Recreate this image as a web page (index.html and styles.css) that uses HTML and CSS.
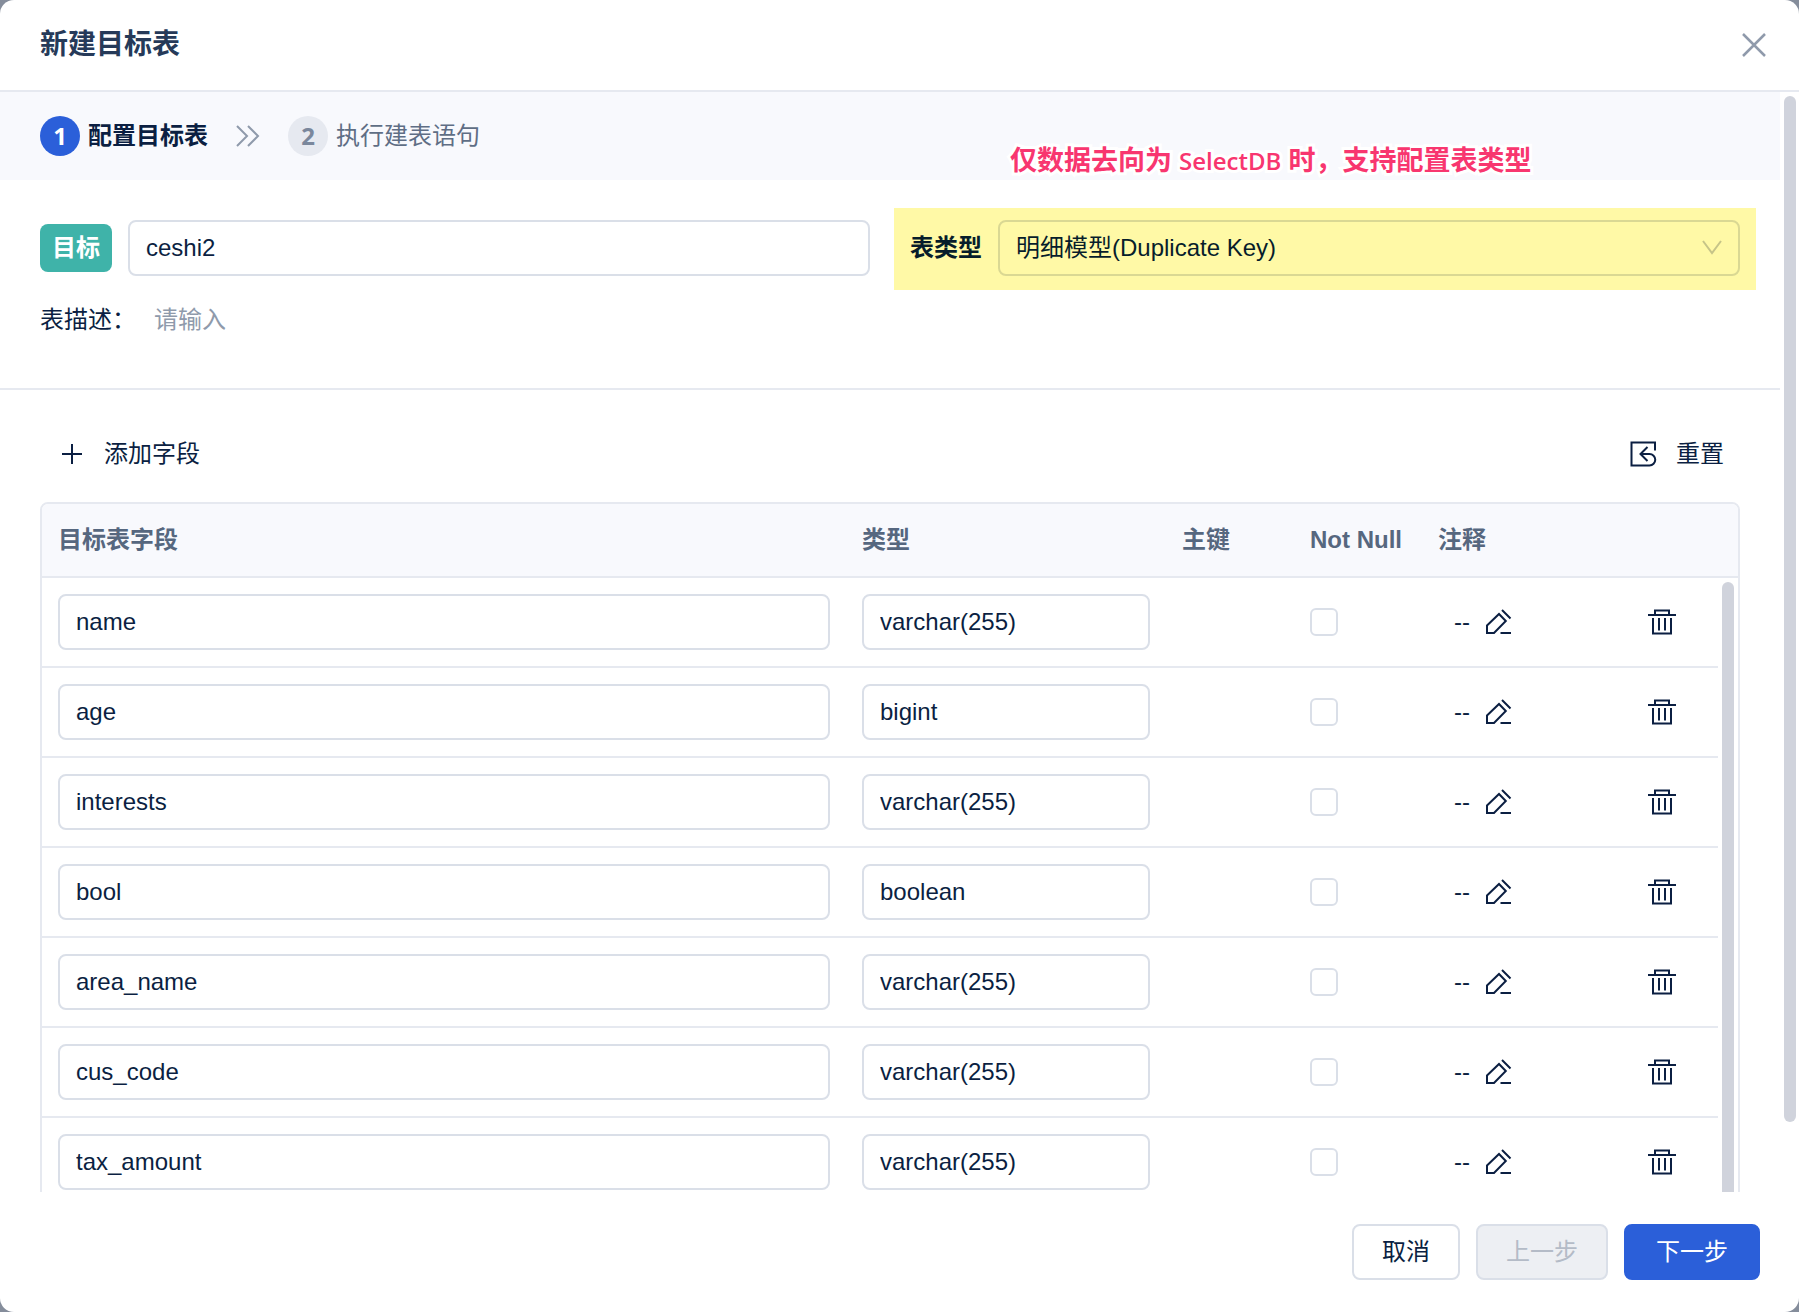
FILE: index.html
```
<!DOCTYPE html>
<html lang="zh-CN">
<head>
  <meta charset="UTF-8" />
  <meta name="viewport" content="width=device-width, initial-scale=1" />
  <title>新建目标表</title>
  <link rel="stylesheet" href="styles.css">
</head>
<body>
  <svg class="sprite" aria-hidden="true">
    <symbol id="icon-edit" viewBox="0 0 28 28">
      <path d="M3 17.5 15 6l6.8 7L10 25H3z M18 2l8.5 8.5 M16.5 25H27" />
    </symbol>
    <symbol id="icon-trash" viewBox="0 0 28 28">
      <path d="M0 7h28 M7 7V2.5h14V7 M5 10v15.5h18V10 M11 10v12.5 M17 10v12.5" />
    </symbol>
  </svg>

  <div class="modal">
    <header class="modal-header">
      <h1>新建目标表</h1>
      <button type="button" class="close" aria-label="关闭">
        <svg viewBox="0 0 24 24"><path d="M1 1l22 22M23 1L1 23" /></svg>
      </button>
    </header>

    <main class="modal-body">
      <div class="content">
        <div class="steps">
          <span class="step-number active">1</span>
          <span class="step-title active">配置目标表</span>
          <svg class="step-arrow" viewBox="0 0 24 24"><path d="M1 2l10 10L1 22M12 2l10 10-10 10" /></svg>
          <span class="step-number">2</span>
          <span class="step-title">执行建表语句</span>
          <p class="note">仅数据去向为 <span class="latin">SelectDB</span> 时，支持配置表类型</p>
        </div>

        <div class="form">
          <div class="form-row">
            <div class="field">
              <label for="target" class="tag">目标</label>
              <input type="text" id="target" class="input" value="ceshi2" />
            </div>
            <div class="field highlight">
              <label for="model">表类型</label>
              <div class="select-wrap">
                <select id="model" class="input">
                  <option>明细模型(Duplicate Key)</option>
                </select>
                <svg class="select-arrow" viewBox="0 0 20 16"><path d="M1 1l9 12 9-12" /></svg>
              </div>
            </div>
          </div>
          <div class="desc-row">
            <label for="desc">表描述：</label>
            <input type="text" id="desc" placeholder="请输入" />
          </div>
        </div>

        <div class="toolbar">
          <button type="button" class="tool">
            <svg viewBox="0 0 32 32"><path d="M16 6v20M6 16h20" /></svg>
            添加字段
          </button>
          <button type="button" class="tool">
            <svg viewBox="0 0 32 32"><path d="M27 12.5V4.5H3.5v23h18a5.75 5.75 0 0 0 0-11.5H13 M19.5 9l-7 7 7 7" /></svg>
            重置
          </button>
        </div>

        <div class="table-wrap">
          <table>
            <thead>
              <tr>
                <th>目标表字段</th>
                <th class="col-type">类型</th>
                <th class="col-flag">主键</th>
                <th class="col-flag">Not Null</th>
                <th class="col-comment">注释</th>
                <th class="col-action"></th>
                <th class="col-scroll"></th>
              </tr>
            </thead>
            <tbody>
              <tr>
                <td><input type="text" class="input" aria-label="目标表字段" value="name" /></td>
                <td><input type="text" class="input" aria-label="类型" value="varchar(255)" /></td>
                <td></td>
                <td><input type="checkbox" aria-label="Not Null" /></td>
                <td><div class="comment">--<button type="button" class="icon-btn" aria-label="编辑注释"><svg><use href="#icon-edit" /></svg></button></div></td>
                <td><button type="button" class="icon-btn" aria-label="删除"><svg><use href="#icon-trash" /></svg></button></td>
                <td class="scroll-cell" rowspan="7"><div class="row-thumb"></div></td>
              </tr>
              <tr>
                <td><input type="text" class="input" aria-label="目标表字段" value="age" /></td>
                <td><input type="text" class="input" aria-label="类型" value="bigint" /></td>
                <td></td>
                <td><input type="checkbox" aria-label="Not Null" /></td>
                <td><div class="comment">--<button type="button" class="icon-btn" aria-label="编辑注释"><svg><use href="#icon-edit" /></svg></button></div></td>
                <td><button type="button" class="icon-btn" aria-label="删除"><svg><use href="#icon-trash" /></svg></button></td>
              </tr>
              <tr>
                <td><input type="text" class="input" aria-label="目标表字段" value="interests" /></td>
                <td><input type="text" class="input" aria-label="类型" value="varchar(255)" /></td>
                <td></td>
                <td><input type="checkbox" aria-label="Not Null" /></td>
                <td><div class="comment">--<button type="button" class="icon-btn" aria-label="编辑注释"><svg><use href="#icon-edit" /></svg></button></div></td>
                <td><button type="button" class="icon-btn" aria-label="删除"><svg><use href="#icon-trash" /></svg></button></td>
              </tr>
              <tr>
                <td><input type="text" class="input" aria-label="目标表字段" value="bool" /></td>
                <td><input type="text" class="input" aria-label="类型" value="boolean" /></td>
                <td></td>
                <td><input type="checkbox" aria-label="Not Null" /></td>
                <td><div class="comment">--<button type="button" class="icon-btn" aria-label="编辑注释"><svg><use href="#icon-edit" /></svg></button></div></td>
                <td><button type="button" class="icon-btn" aria-label="删除"><svg><use href="#icon-trash" /></svg></button></td>
              </tr>
              <tr>
                <td><input type="text" class="input" aria-label="目标表字段" value="area_name" /></td>
                <td><input type="text" class="input" aria-label="类型" value="varchar(255)" /></td>
                <td></td>
                <td><input type="checkbox" aria-label="Not Null" /></td>
                <td><div class="comment">--<button type="button" class="icon-btn" aria-label="编辑注释"><svg><use href="#icon-edit" /></svg></button></div></td>
                <td><button type="button" class="icon-btn" aria-label="删除"><svg><use href="#icon-trash" /></svg></button></td>
              </tr>
              <tr>
                <td><input type="text" class="input" aria-label="目标表字段" value="cus_code" /></td>
                <td><input type="text" class="input" aria-label="类型" value="varchar(255)" /></td>
                <td></td>
                <td><input type="checkbox" aria-label="Not Null" /></td>
                <td><div class="comment">--<button type="button" class="icon-btn" aria-label="编辑注释"><svg><use href="#icon-edit" /></svg></button></div></td>
                <td><button type="button" class="icon-btn" aria-label="删除"><svg><use href="#icon-trash" /></svg></button></td>
              </tr>
              <tr>
                <td><input type="text" class="input" aria-label="目标表字段" value="tax_amount" /></td>
                <td><input type="text" class="input" aria-label="类型" value="varchar(255)" /></td>
                <td></td>
                <td><input type="checkbox" aria-label="Not Null" /></td>
                <td><div class="comment">--<button type="button" class="icon-btn" aria-label="编辑注释"><svg><use href="#icon-edit" /></svg></button></div></td>
                <td><button type="button" class="icon-btn" aria-label="删除"><svg><use href="#icon-trash" /></svg></button></td>
              </tr>
            </tbody>
          </table>
        </div>
      </div>
      <div class="scrollbar"><div class="thumb"></div></div>
    </main>

    <footer class="modal-footer">
      <button type="button" class="btn">取消</button>
      <button type="button" class="btn" disabled>上一步</button>
      <button type="button" class="btn primary">下一步</button>
    </footer>
  </div>
</body>
</html>
```

FILE: styles.css
```
* {
  box-sizing: border-box;
}

body {
  margin: 0;
  background: #858d9b;
  color: #0b1f42;
  font-family: "Liberation Sans", "Noto Sans CJK SC", sans-serif;
  font-size: 24px;
  line-height: 32px;
}

button,
input,
select {
  margin: 0;
  font: inherit;
  color: inherit;
}

button {
  padding: 0;
  border: 0;
  background: none;
  cursor: pointer;
}

svg {
  display: block;
  flex: none;
  fill: none;
  stroke: currentColor;
  stroke-width: 2;
}

.sprite {
  position: absolute;
  width: 0;
  height: 0;
}

.modal {
  display: flex;
  flex-direction: column;
  height: 100vh;
  background: #fff;
  border-radius: 14px;
  overflow: hidden;
}

/* header */
.modal-header {
  flex: none;
  display: flex;
  align-items: center;
  justify-content: space-between;
  height: 92px;
  padding: 0 33px 0 40px;
  border-bottom: 2px solid #e6e9f0;
}

h1 {
  margin: 0;
  font-size: 28px;
  font-weight: 700;
  color: #263a59;
}

.close {
  color: #8f9aab;
}

.close svg {
  width: 24px;
  height: 24px;
  stroke-width: 2.5;
}

.modal-body {
  flex: 1;
  min-height: 0;
  display: flex;
  overflow: hidden;
}

.content {
  flex: 1;
  min-width: 0;
}

.scrollbar {
  flex: none;
  width: 19px;
  padding: 4px 3px 4px 4px;
}

.thumb {
  height: 94%;
  border-radius: 6px;
  background: #d0d3dc;
}

/* steps */
.steps {
  position: relative;
  display: flex;
  align-items: center;
  height: 88px;
  padding: 0 40px;
  background: #f8f9fd;
}

.step-number {
  width: 40px;
  margin-right: 8px;
  border-radius: 50%;
  background: #e6e9f0;
  color: #7a879c;
  font-family: "Open Sans", sans-serif;
  font-weight: 700;
  line-height: 40px;
  text-align: center;
}

.step-number.active {
  background: #2b5fd9;
  color: #fff;
}

.step-title {
  color: #5f6e85;
}

.step-title.active {
  color: #0b1f42;
  font-weight: 700;
}

.step-arrow {
  width: 24px;
  height: 24px;
  margin: 0 28px;
  color: #8f9aab;
}

.note {
  position: absolute;
  top: 52px;
  left: 1010px;
  margin: 0;
  color: #f8366f;
  font-family: "Noto Sans", "Noto Sans CJK SC", sans-serif;
  font-size: 27px;
  font-weight: 700;
  white-space: nowrap;
  paint-order: stroke fill;
  -webkit-text-stroke: 6px #fff;
}

.note .latin {
  font-family: "Open Sans", sans-serif;
  font-size: 24px;
  font-weight: 600;
}

/* form */
.form {
  padding: 28px 24px 52px 40px;
  border-bottom: 2px solid #e6e9f0;
}

.form-row {
  display: flex;
  gap: 24px;
}

.field {
  flex: 1 1 0;
  display: flex;
  align-items: center;
  gap: 16px;
  padding: 12px 0 14px;
}

.tag {
  flex: none;
  padding: 8px 12px;
  border-radius: 8px;
  background: #3fb3a9;
  color: #fff;
  font-weight: 700;
}

.input {
  display: block;
  width: 100%;
  min-width: 0;
  height: 56px;
  padding: 0 16px;
  border: 2px solid #dadfe8;
  border-radius: 8px;
  background: none;
  outline: none;
}

.highlight {
  padding-left: 16px;
  padding-right: 16px;
  background: #fff9a6;
  color: #071d2b;
}

.highlight label {
  flex: none;
  font-weight: 700;
}

.highlight .input {
  border-color: #dad893;
  appearance: none;
}

.select-wrap {
  position: relative;
  flex: 1;
}

.select-arrow {
  position: absolute;
  top: 20px;
  right: 18px;
  width: 20px;
  height: 16px;
  color: #c6c488;
  pointer-events: none;
}

.desc-row {
  display: flex;
  align-items: center;
  margin-top: 14px;
}

.desc-row input {
  flex: 1;
  height: 32px;
  padding: 0 18px;
  border: 0;
  outline: none;
}

.desc-row input::placeholder {
  color: #8f9aab;
}

.toolbar {
  display: flex;
  justify-content: space-between;
  padding: 36px 40px 20px;
}

.tool {
  display: flex;
  align-items: center;
  gap: 16px;
  height: 56px;
  padding: 0 16px;
}

.tool svg {
  width: 32px;
  height: 32px;
}

/* table */
.table-wrap {
  margin: 0 40px;
  border: 2px solid #e6e9f0;
  border-radius: 8px;
  overflow: hidden;
}

table {
  width: 100%;
  table-layout: fixed;
  border-collapse: separate;
  border-spacing: 0;
}

th,
td {
  padding: 0 16px;
  border-bottom: 2px solid #e6e9f0;
  text-align: left;
}

th {
  height: 74px;
  background: #f8f9fd;
  color: #56677f;
  font-weight: 700;
  white-space: nowrap;
}

td {
  height: 90px;
}

.col-type {
  width: 320px;
}

.col-flag {
  width: 128px;
}

.col-comment {
  width: 210px;
}

.col-action {
  width: 86px;
}

.col-scroll {
  width: 20px;
  padding: 0;
}

input[type="checkbox"] {
  display: block;
  width: 28px;
  height: 28px;
  border: 2px solid #dadfe8;
  border-radius: 6px;
  appearance: none;
}

input[type="checkbox"]:checked {
  background: #2b5fd9;
}

.comment {
  display: flex;
  align-items: center;
  gap: 14px;
  padding-left: 16px;
}

.icon-btn {
  display: block;
}

.icon-btn svg {
  width: 28px;
  height: 28px;
}

.scroll-cell {
  position: relative;
  padding: 0;
}

.row-thumb {
  position: absolute;
  top: 4px;
  bottom: 4px;
  left: 4px;
  right: 4px;
  border-radius: 6px;
  background: #d0d3dc;
}

/* footer */
.modal-footer {
  flex: none;
  display: flex;
  justify-content: flex-end;
  gap: 16px;
  padding: 32px 39px;
}

.btn {
  height: 56px;
  padding: 0 28px;
  border: 2px solid #dadfe8;
  border-radius: 8px;
}

.btn:disabled {
  background: #edeff3;
  color: #b4bbc7;
  cursor: default;
}

.btn.primary {
  padding: 0 30px;
  border-color: #2b5fd9;
  background: #2b5fd9;
  color: #fff;
}
```
